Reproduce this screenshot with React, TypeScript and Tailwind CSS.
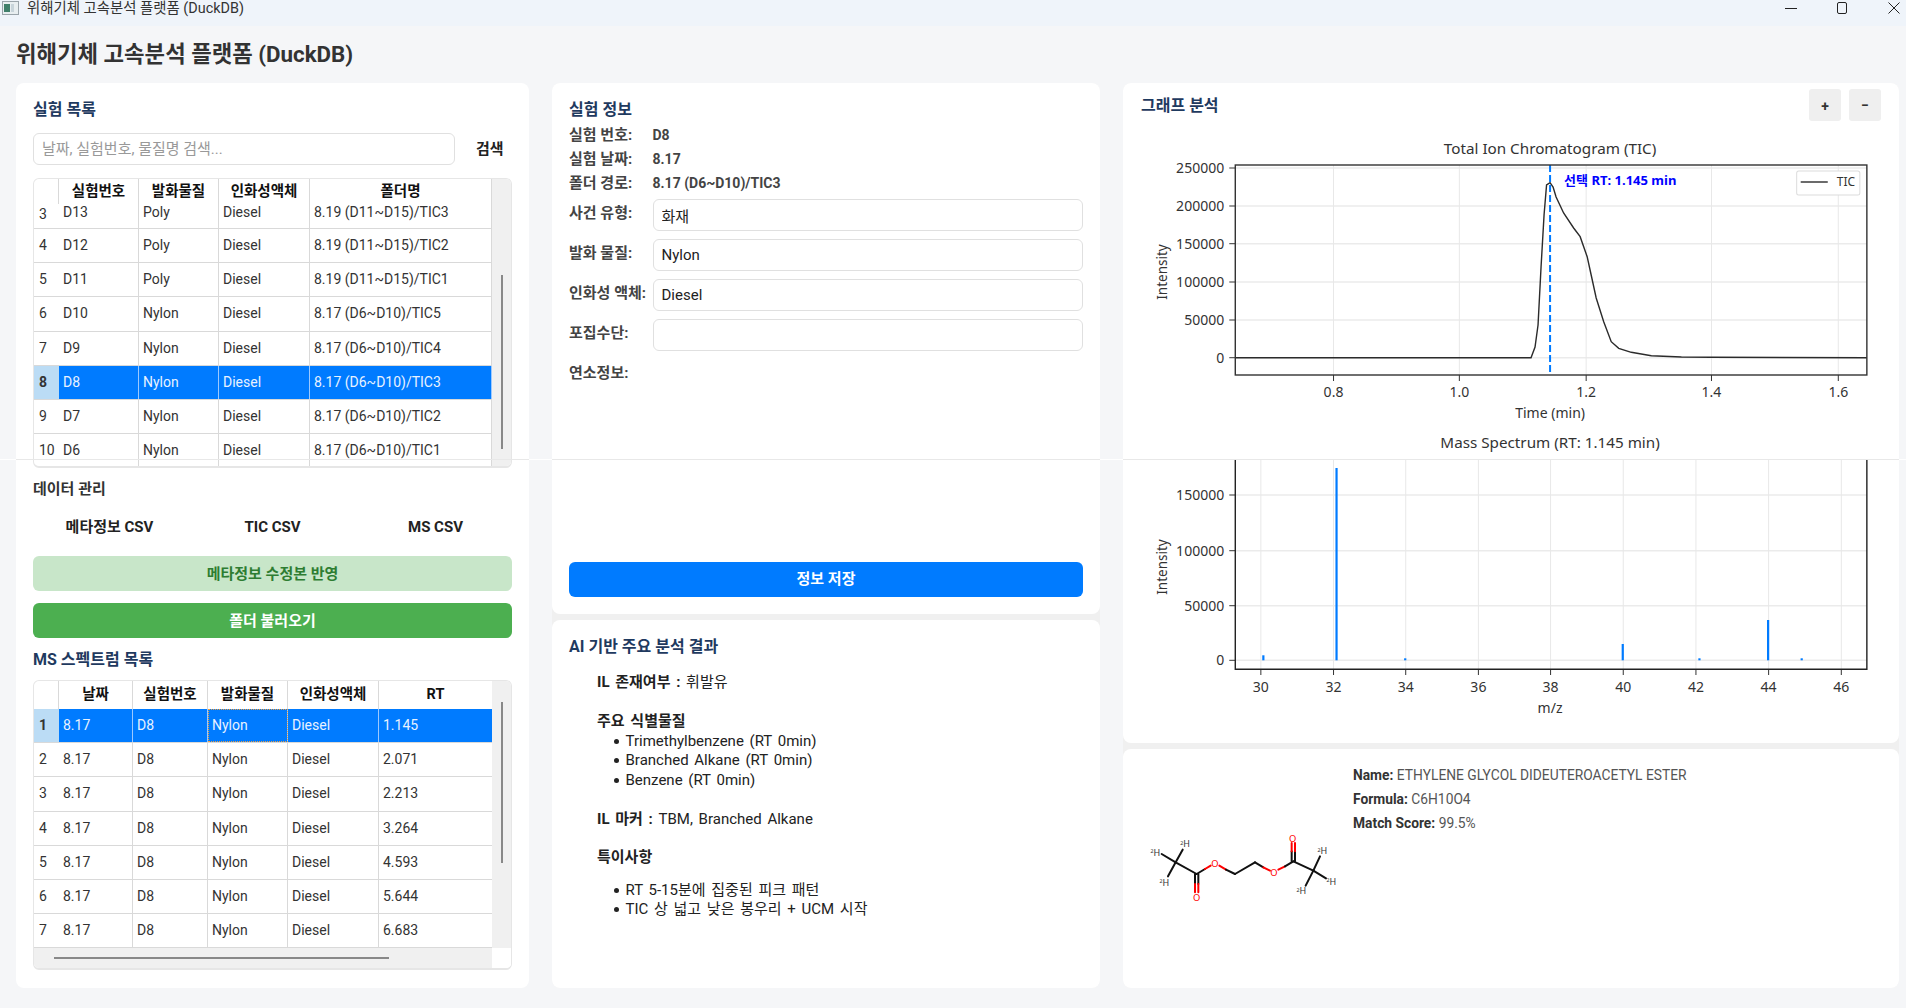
// App.tsx - 위해기체 고속분석 플랫폼 (DuckDB) main window
const FONT = 'Roboto, "Noto Sans CJK KR", sans-serif';
const CHART_FONT = '"Noto Sans", "Noto Sans CJK KR", sans-serif';

type TableProps = {
  columns: { label: string; width: number }[];
  rows: { num: string; cells: string[]; clipped?: boolean; selected?: boolean }[];
  focusCol?: number;
  headerClass: string;
  thumbClass: string;
  hScroll?: boolean;
};

const DataTable = ({ columns, rows, focusCol, headerClass, thumbClass, hScroll }: TableProps) => (
  <div className="flex h-[290px] flex-col overflow-hidden rounded-md border border-[#e6e6e6] border-b-2 text-[14px] text-[#333]">
    <div className="flex min-h-0 flex-1">
      <div className="flex min-w-0 flex-1 flex-col overflow-hidden">
        {/* Header */}
        <div className={`flex shrink-0 ${headerClass}`}>
          <div className="w-[25px] shrink-0 border-r border-[#d9d9d9]" />
          {columns.map((col) => (
            <div
              key={col.label}
              style={{ width: col.width }}
              className="flex shrink-0 items-center justify-center border-r border-[#d9d9d9] text-[14.5px] font-bold text-[#111]"
            >
              {col.label}
            </div>
          ))}
        </div>
        {/* Rows */}
        {rows.map((row) => (
          <div
            key={row.num}
            className={`flex shrink-0 ${row.clipped ? 'h-[25px] items-start' : 'h-[34.2px] items-center'} border-b border-[#d9d9d9]`}
          >
            <div
              className={`flex h-full w-[25px] shrink-0 pl-[5px] ${row.clipped ? 'items-start' : 'items-center'} ${row.selected ? 'bg-[#bbdcf5] font-bold' : ''}`}
            >
              {row.num}
            </div>
            {columns.map((col, i) => (
              <div
                key={col.label}
                style={{ width: col.width }}
                className={`flex h-full shrink-0 pl-[4px] leading-[17px] ${row.clipped ? 'items-start' : 'items-center'} border-r ${
                  row.selected ? 'border-[#9cc9ff] bg-[#007bff] text-[#e8f2ff]' : 'border-[#d9d9d9]'
                } ${row.selected && focusCol === i ? 'outline-1 -outline-offset-1 outline-dotted outline-[#f0a040]' : ''}`}
              >
                {row.cells[i]}
              </div>
            ))}
          </div>
        ))}
      </div>
      {/* Vertical scrollbar */}
      <div className="w-[19px] shrink-0 bg-[#f0f0f0]">
        <div className={`mx-auto w-[2px] bg-[#888] ${thumbClass}`} />
      </div>
    </div>
    {hScroll && (
      <div className="flex h-[20px] shrink-0">
        <div className="flex flex-1 items-center bg-[#f0f0f0] pl-[20px]">
          <div className="h-[2px] w-[335px] bg-[#888]" />
        </div>
        <div className="w-[19px] shrink-0 bg-white" />
      </div>
    )}
  </div>
);

const EXP_COLUMNS = [
  { label: '실험번호', width: 80 },
  { label: '발화물질', width: 80 },
  { label: '인화성액체', width: 91 },
  { label: '폴더명', width: 182 },
];

const EXP_ROWS = [
  { num: '3', cells: ['D13', 'Poly', 'Diesel', '8.19 (D11~D15)/TIC3'], clipped: true },
  { num: '4', cells: ['D12', 'Poly', 'Diesel', '8.19 (D11~D15)/TIC2'] },
  { num: '5', cells: ['D11', 'Poly', 'Diesel', '8.19 (D11~D15)/TIC1'] },
  { num: '6', cells: ['D10', 'Nylon', 'Diesel', '8.17 (D6~D10)/TIC5'] },
  { num: '7', cells: ['D9', 'Nylon', 'Diesel', '8.17 (D6~D10)/TIC4'] },
  { num: '8', cells: ['D8', 'Nylon', 'Diesel', '8.17 (D6~D10)/TIC3'], selected: true },
  { num: '9', cells: ['D7', 'Nylon', 'Diesel', '8.17 (D6~D10)/TIC2'] },
  { num: '10', cells: ['D6', 'Nylon', 'Diesel', '8.17 (D6~D10)/TIC1'] },
];

const MS_COLUMNS = [
  { label: '날짜', width: 74 },
  { label: '실험번호', width: 75 },
  { label: '발화물질', width: 80 },
  { label: '인화성액체', width: 91 },
  { label: 'RT', width: 114 },
];

const MS_RTS = ['1.145', '2.071', '2.213', '3.264', '4.593', '5.644', '6.683'];
const MS_ROWS = [
  ...MS_RTS.map((rt, i) => ({
    num: String(i + 1),
    cells: ['8.17', 'D8', 'Nylon', 'Diesel', rt],
    selected: i === 0,
  })),
  { num: '', cells: ['', '', '', '', ''] },
];

const TIC_Y = [
  ['250000', 168],
  ['200000', 206],
  ['150000', 243.7],
  ['100000', 282],
  ['50000', 320],
  ['0', 357.7],
] as const;
const TIC_X = [
  ['0.8', 1333],
  ['1.0', 1458.5],
  ['1.2', 1585],
  ['1.4', 1710],
  ['1.6', 1836.5],
] as const;

// traced from the plot, in page pixels
const TIC_CURVE =
  '1235,357.7 1530,357.7 1534,347 1537,325 1540,267 1543,215 1545.5,185 1549,182.7 1552,187 1555,197 1562.5,213 1572.5,228 1579,236.7 1586,256.7 1590,275 1595,298 1602.5,321.7 1610,341.7 1617.5,348.3 1630,352.3 1650,355.7 1680,357 1710,357.3 1865,357.7';

// the charts use page coordinates as their viewBox; the group stretches the traced x values a little
const STRETCH = 'translate(1120 0) scale(1.0025 1) translate(-1120 0)';

const TicChart = () => (
  <svg viewBox="1123 125 776 305" className="block h-[305px] w-[776px]" style={{ fontFamily: CHART_FONT }}>
    <g transform={STRETCH}>
      <text x="1549" y="154" textAnchor="middle" fontSize="15.2" fill="#333">Total Ion Chromatogram (TIC)</text>
      {TIC_Y.map(([label, y]) => (
        <g key={label}>
          <line x1="1235" x2="1865" y1={y} y2={y} stroke="#ebebeb" strokeWidth="1.5" />
          <line x1="1229" x2="1235" y1={y} y2={y} stroke="#333" />
          <text x="1224" y={y + 5} textAnchor="end" fontSize="14" fill="#333">{label}</text>
        </g>
      ))}
      {TIC_X.map(([label, x]) => (
        <g key={label}>
          <line x1={x} x2={x} y1="165" y2="375" stroke="#e8e8e8" />
          <line x1={x} x2={x} y1="375" y2="381" stroke="#333" />
          <text x={x} y="397" textAnchor="middle" fontSize="14" fill="#333">{label}</text>
        </g>
      ))}
      <polyline points={TIC_CURVE} fill="none" stroke="#2b2b2b" strokeWidth="1.4" />
      <line x1="1549" x2="1549" y1="165" y2="375" stroke="#007bff" strokeWidth="2" strokeDasharray="7 3" />
      <rect x="1235" y="165" width="630" height="210" fill="none" stroke="#333" strokeWidth="1.4" />
      <text x="1563" y="185" fontSize="13" fontWeight="700" fill="#0000ff">선택 RT: 1.145 min</text>
      <rect x="1795" y="171" width="63" height="24" rx="2" fill="#fff" stroke="#dcdcdc" />
      <line x1="1799" x2="1826" y1="182" y2="182" stroke="#2b2b2b" strokeWidth="1.4" />
      <text x="1835" y="186" fontSize="12" fill="#333">TIC</text>
      <text x="1549" y="418" textAnchor="middle" fontSize="14" fill="#333">Time (min)</text>
      <text transform="translate(1167 272) rotate(-90)" textAnchor="middle" fontSize="13.5" fill="#333">Intensity</text>
    </g>
  </svg>
);

const MS_Y = [
  ['150000', 495],
  ['100000', 550.7],
  ['50000', 605.7],
  ['0', 660.3],
] as const;
const MS_X = [
  ['30', 1260.5],
  ['32', 1333],
  ['34', 1405],
  ['36', 1477.5],
  ['38', 1549.5],
  ['40', 1622],
  ['42', 1694.5],
  ['44', 1767],
  ['46', 1839.5],
] as const;
const MS_BARS = [
  [1263, 655.3],
  [1336, 468],
  [1404.5, 658.3],
  [1621.5, 644],
  [1698, 658.3],
  [1766.5, 620],
  [1800, 658.3],
];

const MsChart = () => (
  <svg viewBox="1123 430 776 305" className="block h-[305px] w-[776px]" style={{ fontFamily: CHART_FONT }}>
    <g transform={STRETCH}>
      <text x="1549" y="448" textAnchor="middle" fontSize="15.2" fill="#333">Mass Spectrum (RT: 1.145 min)</text>
      {MS_Y.map(([label, y]) => (
        <g key={label}>
          <line x1="1235" x2="1865" y1={y} y2={y} stroke="#ebebeb" strokeWidth="1.5" />
          <line x1="1229" x2="1235" y1={y} y2={y} stroke="#333" />
          <text x="1224" y={y + 5} textAnchor="end" fontSize="14" fill="#333">{label}</text>
        </g>
      ))}
      {MS_X.map(([label, x]) => (
        <g key={label}>
          <line x1={x} x2={x} y1="459" y2="669" stroke="#e8e8e8" />
          <line x1={x} x2={x} y1="669" y2="675" stroke="#333" />
          <text x={x} y="692" textAnchor="middle" fontSize="14" fill="#333">{label}</text>
        </g>
      ))}
      {MS_BARS.map(([x, top]) => (
        <line key={x} x1={x} x2={x} y1={top} y2="660.3" stroke="#007bff" strokeWidth="2.2" />
      ))}
      <polyline points="1235,459 1235,669.3 1865,669.3 1865,459" fill="none" stroke="#222" strokeWidth="1.4" />
      <text x="1549" y="713" textAnchor="middle" fontSize="14" fill="#333">m/z</text>
      <text transform="translate(1167 567) rotate(-90)" textAnchor="middle" fontSize="13.5" fill="#333">Intensity</text>
    </g>
  </svg>
);

// RDKit style depiction, coordinates are 3x page pixels
const Bond = ({ a, b, color = '#111' }: { a: number[]; b: number[]; color?: string }) => (
  <line x1={a[0]} y1={a[1]} x2={b[0]} y2={b[1]} stroke={color} strokeWidth="6" strokeLinecap="round" />
);

const Deuterium = ({ x, y }: { x: number; y: number }) => (
  <text x={x} y={y} textAnchor="middle" fontSize="27" fill="#333" fontFamily={CHART_FONT}>
    <tspan fontSize="16" dy="-8">2</tspan>
    <tspan dy="8">H</tspan>
  </text>
);

const Oxygen = ({ x, y }: { x: number; y: number }) => (
  <text x={x} y={y + 10} textAnchor="middle" fontSize="28" fill="#ff0000" fontFamily={CHART_FONT}>O</text>
);

const Molecule = () => (
  <svg viewBox="0 0 639 300" className="h-[100px] w-[213px] shrink-0">
    <Bond a={[107, 130]} b={[128, 92]} />
    <Bond a={[107, 130]} b={[65, 105]} />
    <Bond a={[107, 130]} b={[84, 172]} />
    <Bond a={[107, 130]} b={[170, 165]} />
    <Bond a={[165, 165]} b={[165, 195]} />
    <Bond a={[175, 165]} b={[175, 195]} />
    <Bond a={[165, 195]} b={[165, 220]} color="#ff0000" />
    <Bond a={[175, 195]} b={[175, 220]} color="#ff0000" />
    <Bond a={[170, 165]} b={[195, 150]} />
    <Bond a={[195, 150]} b={[212, 140]} color="#ff0000" />
    <Bond a={[238, 140]} b={[258, 152]} color="#ff0000" />
    <Bond a={[258, 152]} b={[285, 165]} />
    <Bond a={[285, 165]} b={[345, 130]} />
    <Bond a={[345, 130]} b={[370, 145]} />
    <Bond a={[370, 145]} b={[390, 155]} color="#ff0000" />
    <Bond a={[415, 152]} b={[435, 142]} color="#ff0000" />
    <Bond a={[435, 142]} b={[460, 127]} />
    <Bond a={[455, 127]} b={[455, 97]} />
    <Bond a={[465, 127]} b={[465, 97]} />
    <Bond a={[455, 97]} b={[455, 72]} color="#ff0000" />
    <Bond a={[465, 97]} b={[465, 72]} color="#ff0000" />
    <Bond a={[460, 127]} b={[520, 155]} />
    <Bond a={[520, 155]} b={[540, 112]} />
    <Bond a={[520, 155]} b={[558, 178]} />
    <Bond a={[520, 155]} b={[497, 200]} />
    <Deuterium x={135} y={85} />
    <Deuterium x={46} y={110} />
    <Deuterium x={73} y={200} />
    <Deuterium x={547} y={106} />
    <Deuterium x={574} y={198} />
    <Deuterium x={484} y={226} />
    <Oxygen x={170} y={235} />
    <Oxygen x={225} y={133} />
    <Oxygen x={402} y={160} />
    <Oxygen x={458} y={58} />
  </svg>
);

const InfoRow = ({ label, value }: { label: string; value: string }) => (
  <div className="flex h-[24px] items-center font-bold text-[#444]">
    <span className="w-[83.5px] shrink-0 text-[15px]">{label}</span>
    <span className="text-[14px]">{value}</span>
  </div>
);

const FieldRow = ({ label, value }: { label: string; value: string }) => (
  <div className="flex h-[32px]">
    <span className="mt-[5px] h-[18px] w-[83.5px] shrink-0 text-[15px] leading-[18px] whitespace-nowrap font-bold text-[#444]">{label}</span>
    <input
      readOnly
      defaultValue={value}
      className="h-[32px] min-w-0 flex-1 rounded-md border border-[#e0e0e0] bg-white pl-[8px] text-[15px] font-normal text-[#222] outline-none"
    />
  </div>
);

const Bullet = ({ children }: { children: string }) => (
  <li className="flex h-[19.5px] items-center pl-[17px]">
    <span className="mr-[6.5px] h-[5px] w-[5px] shrink-0 rounded-full bg-[#222]" />
    {children}
  </li>
);

const Seam = () => (
  <div className="absolute top-[459px] right-0 left-0 flex h-px bg-white">
    <div className="ml-[16px] w-[513px] bg-[#e8e8e8]" />
    <div className="ml-[23px] w-[548px] bg-[#e8e8e8]" />
    <div className="ml-[23px] w-[776px] bg-[#e8e8e8]" />
  </div>
);

export default function App() {
  return (
    <div
      className="relative flex h-[1008px] w-[1906px] flex-col overflow-hidden bg-[#f5f6f8] text-[14px]"
      style={{ fontFamily: FONT }}
    >
      {/* Window title bar */}
      <div className="flex h-[26px] shrink-0 items-start bg-[#eff4fa]">
        <svg width="17" height="14" viewBox="0 0 17 14" className="mt-[1px] ml-[2px]">
          <rect x="0.5" y="0.5" width="16" height="13" fill="#e8eef0" stroke="#9aa4aa" />
          <rect x="2" y="3" width="6" height="8" fill="#3f7f6a" />
          <rect x="9" y="3" width="3" height="8" fill="#c8d4da" />
        </svg>
        <span className="ml-[8px] text-[14.4px] leading-[18px] text-[#333]">위해기체 고속분석 플랫폼 (DuckDB)</span>
        <div className="ml-auto flex h-[16px] items-center">
          <svg width="12" height="12" viewBox="0 0 12 12" className="mr-[39px]">
            <line x1="0" x2="12" y1="6.5" y2="6.5" stroke="#222" />
          </svg>
          <svg width="12" height="12" viewBox="0 0 12 12" className="mr-[40px]">
            <rect x="1.5" y="0.5" width="9" height="11" rx="1.5" fill="none" stroke="#222" />
          </svg>
          <svg width="12" height="12" viewBox="0 0 12 12" className="mr-[6px]">
            <path d="M0.5 0.5 L11.5 11.5 M11.5 0.5 L0.5 11.5" stroke="#222" />
          </svg>
        </div>
      </div>

      {/* Page title */}
      <h1 className="flex h-[57px] shrink-0 items-center pt-[1px] pl-[16px] text-[22.3px] font-bold text-[#333]">
        위해기체 고속분석 플랫폼 (DuckDB)
      </h1>

      <div className="flex h-[905px] gap-[23px] pl-[16px]">
        {/* Left column */}
        <section className="flex w-[513px] flex-col rounded-lg bg-white px-[17px] pt-[17px]">
          <h2 className="text-[16px] leading-[20px] font-bold text-[#1f3a5f]">실험 목록</h2>
          <div className="mt-[13px] flex h-[32px] items-center">
            <input
              readOnly
              placeholder="날짜, 실험번호, 물질명 검색..."
              className="h-[32px] w-[422px] rounded-md border border-[#e0e0e0] bg-white pl-[8px] text-[15px] outline-none placeholder:text-[#999]"
            />
            <button className="ml-[21px] text-[15px] font-bold text-[#222]">검색</button>
          </div>
          <div className="mt-[13px]">
            <DataTable
              columns={EXP_COLUMNS}
              rows={EXP_ROWS}
              headerClass="h-[25px]"
              thumbClass="mt-[96px] h-[174px]"
            />
          </div>
          <h3 className="mt-[12px] text-[15px] leading-[18px] font-bold text-[#333]">데이터 관리</h3>
          <div className="mt-[12px] flex h-[32px] gap-[10px] pt-[2px] text-[15px] font-bold text-[#222]">
            <button className="flex-1">메타정보 CSV</button>
            <button className="flex-1">TIC CSV</button>
            <button className="flex-1">MS CSV</button>
          </div>
          <button className="mt-[14px] h-[35px] shrink-0 rounded-md bg-[#c8e6c9] pt-[2px] text-[15px] font-bold text-[#2e7d32]">
            메타정보 수정본 반영
          </button>
          <button className="mt-[12px] h-[35px] shrink-0 rounded-md bg-[#4caf50] pt-[2px] text-[15px] font-bold text-white">
            폴더 불러오기
          </button>
          <h2 className="mt-[12px] text-[16px] leading-[20px] font-bold text-[#1f3a5f]">MS 스펙트럼 목록</h2>
          <div className="mt-[10px]">
            <DataTable
              columns={MS_COLUMNS}
              rows={MS_ROWS}
              focusCol={2}
              headerClass="h-[28px]"
              thumbClass="mt-[21px] h-[161px]"
              hScroll
            />
          </div>
        </section>

        {/* Middle column */}
        <div className="flex w-[548px] flex-col gap-[6px] rounded-lg bg-[#f0f0f0]">
          <section className="flex h-[531px] flex-col rounded-lg bg-white px-[17px] pt-[17px] pb-[17px]">
            <h2 className="text-[16px] leading-[20px] font-bold text-[#1f3a5f]">실험 정보</h2>
            <div className="mt-[3px]">
              <InfoRow label="실험 번호:" value="D8" />
              <InfoRow label="실험 날짜:" value="8.17" />
              <InfoRow label="폴더 경로:" value="8.17 (D6~D10)/TIC3" />
            </div>
            <div className="mt-[4px] flex flex-col gap-[8px]">
              <FieldRow label="사건 유형:" value="화재" />
              <FieldRow label="발화 물질:" value="Nylon" />
              <FieldRow label="인화성 액체:" value="Diesel" />
              <FieldRow label="포집수단:" value="" />
            </div>
            <div className="mt-[13px] text-[15px] leading-[18px] font-bold text-[#444]">연소정보:</div>
            <button className="mt-auto h-[35px] shrink-0 rounded-md bg-[#007bff] text-[15px] font-bold text-white">정보 저장</button>
          </section>

          <section className="flex-1 rounded-lg bg-white px-[17px] pt-[17px]">
            <h2 className="text-[16px] leading-[20px] font-bold text-[#1f3a5f]">AI 기반 주요 분석 결과</h2>
            <div className="mt-[16px] pl-[28px] text-[15px] leading-[19.5px] text-[#222] [word-spacing:2px]">
              <p><b>IL 존재여부 :</b> 휘발유</p>
              <p className="mt-[19.5px] font-bold">주요 식별물질</p>
              <ul>
                <Bullet>Trimethylbenzene (RT 0min)</Bullet>
                <Bullet>Branched Alkane (RT 0min)</Bullet>
                <Bullet>Benzene (RT 0min)</Bullet>
              </ul>
              <p className="mt-[19.5px]"><b>IL 마커 :</b> TBM, Branched Alkane</p>
              <p className="mt-[19px] font-bold">특이사항</p>
              <ul className="mt-[13px]">
                <Bullet>RT 5-15분에 집중된 피크 패턴</Bullet>
                <Bullet>TIC 상 넓고 낮은 봉우리 + UCM 시작</Bullet>
              </ul>
            </div>
          </section>
        </div>

        {/* Right column */}
        <div className="flex w-[776px] flex-col gap-[6px] rounded-lg bg-[#f0f0f0]">
          <section className="h-[660px] rounded-lg bg-white">
            <div className="flex h-[42px] items-start pt-[6px] pr-[18px] pl-[18px]">
              <h2 className="mt-[7px] text-[16px] leading-[20px] font-bold text-[#1f3a5f]">그래프 분석</h2>
              <button className="ml-auto h-[32px] w-[32px] rounded-[3px] bg-[#efefef] pt-[2px] font-bold text-[#333]">+</button>
              <button className="ml-[8px] h-[32px] w-[32px] rounded-[3px] bg-[#efefef] font-bold text-[#333]">−</button>
            </div>
            <TicChart />
            <MsChart />
          </section>

          <section className="flex flex-1 items-center rounded-lg bg-white pl-[17px]">
            <Molecule />
            <div className="mb-auto pt-[14px] text-[13.8px] leading-[24px] text-[#555]">
              <p><b className="text-[#333]">Name:</b> ETHYLENE GLYCOL DIDEUTEROACETYL ESTER</p>
              <p><b className="text-[#333]">Formula:</b> C6H10O4</p>
              <p><b className="text-[#333]">Match Score:</b> 99.5%</p>
            </div>
          </section>
        </div>
      </div>

      {/* capture seam across the whole window */}
      <Seam />
    </div>
  );
}
